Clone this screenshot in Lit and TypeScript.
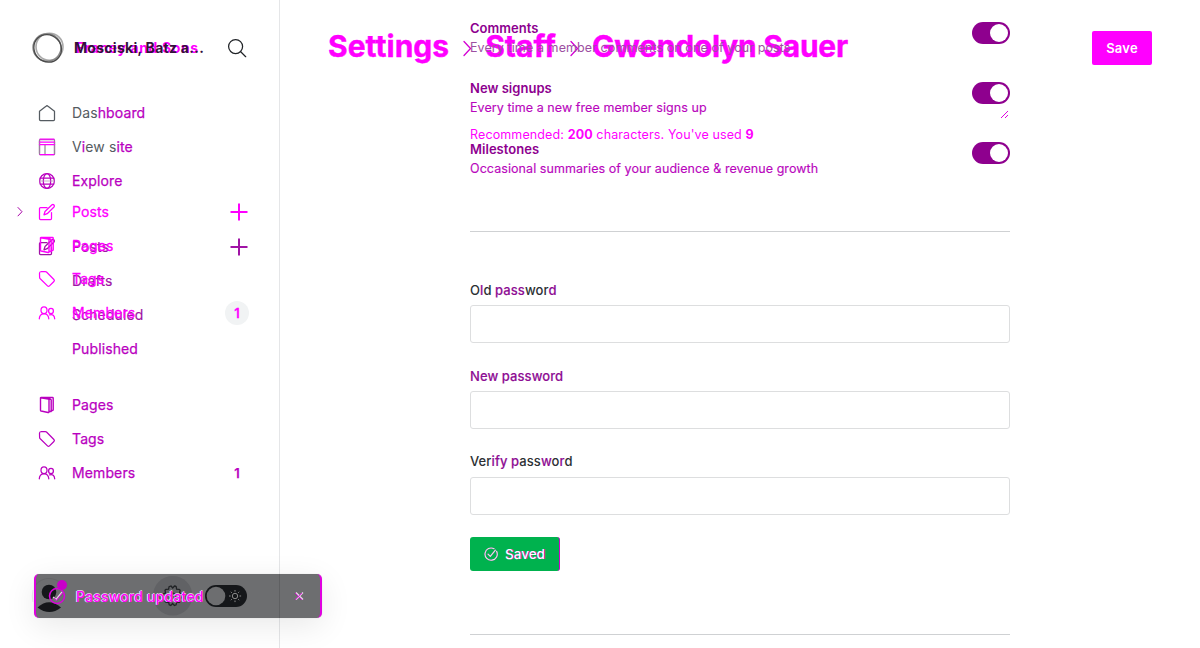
import { LitElement, html, css, svg } from "lit";
import { customElement } from "lit/decorators.js";

const icon = (body: unknown, size = 16, box = "0 0 16 16") =>
  html`<svg width=${size} height=${size} viewBox=${box} fill="none" stroke="currentColor" stroke-width="1.25" stroke-linecap="round" stroke-linejoin="round">${body}</svg>`;

const home = svg`<path d="M.5 6.2v8.3q0 1 1 1h13q1 0 1-1V6.2L9 1.2Q8 .3 7 1.2z"/>`;
const layout = svg`<rect x=".5" y=".5" width="15" height="15" rx=".6" stroke="#8f8392"/><path d="M6 6v9.5" stroke="#909090"/><path d="M15.5 3v12M.5 2v12" stroke="#9d7fa0"/><path d="M1 0h14M.5 3h15M.5 5.5h15M1 15.5h14" stroke="#f0f"/>`;
const globe = svg`<circle cx="8" cy="8" r="7.4"/><ellipse cx="8" cy="8" rx="3.7" ry="7.4"/><path d="M1.3 5h13.4M1.3 11h13.4"/><path d="M.6 8h14.8" stroke="#b99ab9" stroke-width=".8"/>`;
const edit = svg`<path d="M8 3.5H1.5q-1 0-1 1v10q0 1 1 1h10q1 0 1-1V8.5M6 7.5l7-6.7q1-.7 2 .2.8 1 0 2L8.2 9.7 5 10.8z"/>`;
const pages = svg`<path d="M1.5.8v12.4q0 .6.6.8l7 1.5q.9.2.9-.7V3q0-.7-.7-.9L1.500.8M2 .5h11.500q.700 0 .700.700v11.600q0 .700-.700.700H12M7 1.200l4.600 1.100q.600.200.600.800v11.400h-2" stroke-width="1.400"/>`;
const tag = svg`<path d="M.6 6.2.5 2.3Q.5.6 2.3.5h4q.7 0 1.2.5l7.4 7.5q1 1 0 2l-4.4 4.4q-1 1-2 0L1 7.5q-.4-.5-.4-1.3z"/>`;
const members = svg`<ellipse cx="5" cy="5.2" rx="3" ry="3.3"/><ellipse cx="12" cy="6" rx="2.4" ry="2.6"/><path d="M.3 13.8q.2-4.7 4.7-5.2 4.5.4 4.8 5.2M10.6 9.9q4.7-1.3 5.1 3.9"/>`;
const plus = svg`<path d="M9 .5v17M.5 9h17" stroke-width="2" stroke-linecap="butt"/>`;
const chevron = svg`<path d="m1 .5 4 4.2-4 4.2" stroke-width="1" stroke="#a800a8"/>`;
const check = svg`<path d="M14.4 5A7 7 0 1 1 11.5 2M4.6 8.2l2.6 2.6L13 3.6" stroke-width="1.3"/>`;

@customElement("app-root")
export class AppRoot extends LitElement {
  static styles = css`
    :host { display: block; width: 1200px; height: 648px; position: relative; overflow: hidden; background: #fff;
      font-family: Inter, "Liberation Sans", sans-serif; font-size: 14px; color: #394047; }
    * { box-sizing: border-box; }
    svg { display: block; flex: none; overflow: visible; }
    .shell { display: grid; grid-template-columns: 280px 1fr; height: 648px; }
    .side { border-right: 1px solid #e5e6e8; display: grid; grid-template-rows: 96px 1fr; min-width: 0; }
    .brand { display: flex; align-items: center; padding: 0 33px 0 32px; }
    .name { display: grid; width: 154px; margin-left: 10px; font-weight: 700; font-size: 14px; line-height: 20px; white-space: nowrap; }
    .name span { grid-area: 1 / 1; }
    .ghost { color: #f0f; letter-spacing: .62px; padding-left: 2px; }
    .real { color: #33103b; letter-spacing: .28px; }
    .search { color: #202327; margin-left: auto; margin-right: 1px; }
    .navs { display: grid; }
    .nav { grid-area: 1 / 1; }
    .row { display: flex; align-items: center; height: 34px; padding: 0 31px 0 39px; letter-spacing: .12px; white-space: nowrap; }
    .row .label { margin: -2px 0 0 17px; flex: 1; }
    .row.sub .label { margin-left: 33px; }
    .over { padding-top: 99px; }
    .over .row { height: 33.6px; }
    .over .row .label { margin-top: 0; }
    .over .add { padding-top: 1px; }
    .add { margin-right: 1px; }
    .purple { color: #b900bf; -webkit-text-stroke: .25px #b900bf; }
    .pink { color: #f0f; -webkit-text-stroke: .3px #f0f; }
    .mix { color: #a014a5; -webkit-text-stroke: .15px #a014a5; }
    .grey { color: #555b61; }
    .gap32 { height: 32px; } .gap22 { height: 22px; }
    .count { width: 24px; height: 24px; border-radius: 50%; display: grid; place-items: center; font-weight: 600; font-size: 13px; }
    .count.filled { background: #f1f3f4; }
    .expand { width: 39px; margin-left: -39px; padding-left: 17px; }
    .main { position: relative; padding: 19px 190px 0; }
    .setting { display: flex; justify-content: space-between; height: 60px; font-size: 13px; line-height: 19px; }
    .setting:nth-child(3) { padding-top: 1px; }
    .setting b { display: block; font-weight: 600; color: #8d008f; letter-spacing: .03px; }
    .setting p { position: relative; z-index: 1; margin: 0; color: #b907bd; font-size: 12.5px; letter-spacing: .07px; white-space: nowrap; -webkit-text-stroke: .15px #b907bd; }
    .setting .dim { color: #9d4fa2; -webkit-text-stroke: 0; letter-spacing: .09px; }
    .switch { width: 38px; height: 22px; margin-top: 3px; border-radius: 11px; background: #8e008e; padding: 2px; display: flex; justify-content: flex-end; }
    .setting:nth-child(3) .switch { margin-top: 2px; }
    .knob { width: 18px; height: 18px; border-radius: 50%; background: #fff; }
    .line { height: 1px; background: #cfd1d3; }
    .form { padding-top: 48px; height: 402px; }
    .field { height: 86px; }
    .field label { display: block; font-size: 13px; font-weight: 500; line-height: 20px; height: 25px; color: #2c3034; letter-spacing: .08px; }
    .field:nth-child(3) label { line-height: 18px; }
    .field .mix { color: #8c0e92; }
    .box { height: 38px; border: 1px solid #dddedf; border-radius: 3px; }
    .saved { width: 90px; height: 34px; margin-top: -1px; background: #00b24e; border-right: 1px solid #c0c; border-radius: 3px; color: #fff; display: flex; align-items: center; gap: 7px; padding-left: 14px; font-weight: 500; font-size: 13.5px; text-shadow: 1px 0 #c000c0; }
    .mark { color: #e3ece6; filter: drop-shadow(.8px 0 #a010a0); }
    .head { position: absolute; left: 328px; top: 26px; width: 824px; height: 42px; display: flex; align-items: center; color: #f0f; }
    .crumb { font-size: 30px; font-weight: 700; line-height: 40px; margin-top: -2px; letter-spacing: .02px; white-space: nowrap; -webkit-text-stroke: .4px #f0f; }
    .crumb.last { letter-spacing: -.25px; }
    .sep { width: 36px; padding-left: 14px; margin-top: 4px; }
    .save { margin: 2px 0 0 auto; width: 60px; height: 34px; border-radius: 2px; background: #f0f; color: #fff; font-weight: 600; font-size: 13px; letter-spacing: .2px; display: grid; place-items: center; }
    .hint { position: absolute; left: 470px; top: 126px; font-size: 12.5px; line-height: 18px; letter-spacing: .12px; color: #f0f; white-space: nowrap; }
    .grip { position: absolute; left: 1000px; top: 110px; }
    .toast { position: absolute; left: 34px; top: 574px; width: 288px; height: 44px; background: #6d6e70; border: solid #e000e0; border-width: 0 2px; border-radius: 5px; box-shadow: 0 8px 32px rgba(0,0,0,.09), 0 0 1px rgba(0,0,0,.2); }
    .art { position: absolute; left: 30px; top: 570px; }
    .msg { position: absolute; left: 76px; top: 587px; font-size: 14px; line-height: 20px; font-weight: 500; letter-spacing: .2px; color: #ff00ff; text-shadow: -1px 0 #f0e4f0, 0 -1px #d8c0d8; white-space: nowrap; }
  `;

  private row(glyph: unknown, label: unknown, tone: string, end: unknown = "") {
    return html`<div class="row ${tone}">${glyph ? icon(glyph) : ""}<span class="label">${label}</span>${end}</div>`;
  }

  private setting(title: string, text: string, tone = "") {
    return html`<div class="setting"><div><b>${title}</b><p class=${tone}>${text}</p></div><div class="switch"><div class="knob"></div></div></div>`;
  }

  render() {
    const add = html`<span class="add">${icon(plus, 18, "0 0 18 18")}</span>`;
    const arrow = html`<span class="sep">${icon(svg`<path d="m1 .5 6.5 7-6.5 7" stroke-width="1.3" stroke="#d400d4"/>`, 16)}</span>`;
    return html`
      <div class="shell">
        <aside class="side">
          <div class="brand">
            <svg width="32" height="32" viewBox="0 0 32 32" fill="none">
              <ellipse cx="17.5" cy="14.8" rx="13.5" ry="13.6" stroke="#aaa" stroke-width="1.6"/>
              <ellipse cx="15" cy="15.5" rx="14" ry="13.7" stroke="#888" stroke-width="1.4"/>
              <ellipse cx="16" cy="16.5" rx="14.3" ry="13.3" stroke="#4a4a4a" stroke-width="1.3" transform="rotate(45 16 16)"/>
            </svg>
            <div class="name"><span class="ghost">Franey and Sons</span><span class="real">Mosciski, Batz a...</span></div>
            <span class="search">${icon(svg`<circle cx="7.6" cy="7.6" r="7"/><path d="m12.7 12.7 5 5"/>`, 18, "0 0 18 18")}</span>
          </div>
          <div class="navs">
            <nav class="nav">
              ${this.row(home, html`Das<span class="purple">hboard</span>`, "grey")}
              ${this.row(layout, html`V<span class="purple">i</span>ew s<span class="purple">ite</span>`, "grey")}
              ${this.row(globe, "Explore", "purple")}
              <div class="gap32"></div>
              ${this.row(edit, "Posts", "mix", add)}
              ${this.row("", "Drafts", "sub mix")}
              ${this.row("", "Scheduled", "sub mix")}
              ${this.row("", "Published", "sub purple")}
              <div class="gap22"></div>
              ${this.row(pages, "Pages", "purple")}
              ${this.row(tag, "Tags", "purple")}
              ${this.row(members, "Members", "purple", html`<span class="count">1</span>`)}
            </nav>
            <nav class="nav over">
              <div class="row pink"><span class="expand">${icon(chevron, 9, "0 0 9 9")}</span>${icon(edit)}<span class="label">Posts</span>${add}</div>
              ${this.row(pages, "Pages", "pink")}
              ${this.row(tag, "Tags", "pink")}
              ${this.row(members, "Members", "pink", html`<span class="count filled">1</span>`)}
            </nav>
          </div>
        </aside>
        <main class="main">
          <div>
            ${this.setting("Comments", "Every time a member comments on one of your posts", "dim")}
            ${this.setting("New signups", "Every time a new free member signs up")}
            ${this.setting("Milestones", "Occasional summaries of your audience & revenue growth")}
          </div>
          <div class="gap32"></div>
          <div class="line"></div>
          <div class="form">
            <div class="field"><label>O<span class="mix">l</span>d <span class="mix">pass</span>wor<span class="mix">d</span></label><div class="box"></div></div>
            <div class="field"><label><span class="mix">New password</span></label><div class="box"></div></div>
            <div class="field"><label>Ver<span class="mix">ify p</span>ass<span class="mix">w</span>o<span class="mix">r</span>d</label><div class="box"></div></div>
            <div class="saved"><span class="mark">${icon(check, 14)}</span>Saved</div>
          </div>
          <div class="line"></div>
        </main>
      </div>

      <div class="head">
        <span class="crumb">Settings</span>
        ${arrow}
        <span class="crumb">Staff</span>
        ${arrow}
        <span class="crumb last">Gwendolyn Sauer</span>
        <span class="save">Save</span>
      </div>
      <div class="hint">Recommended: <b>200</b> characters. You've used <b>9</b></div>
      <svg class="grip" width="10" height="10" viewBox="0 0 10 10" fill="none"><path d="m1 8 7-7M5 8l3-3" stroke="#e000e0"/></svg>

      <div class="toast"></div>
      <svg class="art" width="296" height="52" viewBox="30 570 296 52" fill="none">
        <path d="M36 584.5a17 17 0 0 1 26 0" stroke="#656668"/>
        <path d="M33 590q-1.5 6 0 12" stroke="#e2e2e4"/>
        <circle cx="49" cy="592" r="7.3" fill="#15171a"/>
        <path d="M37.5 607.5q11.5-10.5 23.5 0-11.5 9-23.5 0z" fill="#15171a"/>
        <circle cx="172.7" cy="595.7" r="19.7" fill="#616265"/>
        <path d="m171 586 1.7 2 1.8-2q1.2 0 1.7.7l.4 2.5 2.5.1 1 1-.5 2.7 2.7 1v3.5l-2.5 1 .5 2.8-1 1-2.7 0-.5 2.5-1.7.7-1.8-2-1.8 2-1.6-.7-.5-2.5-2.7 0-1-1 .5-2.8-2.4-1v-3.5l2.4-1-.5-2.7 1-1 2.6-.1.5-2.5z" stroke="#202225" stroke-width="1.3"/>
        <circle cx="172.7" cy="596" r="3" stroke="#202225"/>
        <rect x="205" y="585" width="42" height="22" rx="11" fill="#15171a"/>
        <circle cx="216" cy="596" r="9.3" fill="#6d6e70"/>
        <circle cx="235" cy="596" r="2.7" stroke="#888"/>
        <path d="M235 590v1.6M235 600.5v1.6M229 596h1.6M239.5 596h1.6M230.8 591.8l1 1M238.2 599.2l1 1M230.8 600.2l1-1M238.2 592.8l1-1" stroke="#888"/>
        <path d="M279.5 574v44" stroke="#5f6062"/>
        <circle cx="57" cy="596" r="7.5" stroke="#dc00dc" stroke-width="1.5"/>
        <path d="m53 597 3 2.5 6-7.5" stroke="#e7cee7" stroke-width="1.3"/>
        <path d="m54 598 2.5 2.5 6-7.5" stroke="#d0d"/>
        <circle cx="62" cy="585" r="5" fill="#c900c9"/>
        <path d="m296 592.5 7 7m0-7-7 7" stroke="#ead2ea" stroke-width="1.4"/>
        <path d="m295 593 7 7m0-7-7 7" stroke="#e000e0" stroke-width=".8"/>
      </svg>
      <div class="msg">Password updated</div>
    `;
  }
}
